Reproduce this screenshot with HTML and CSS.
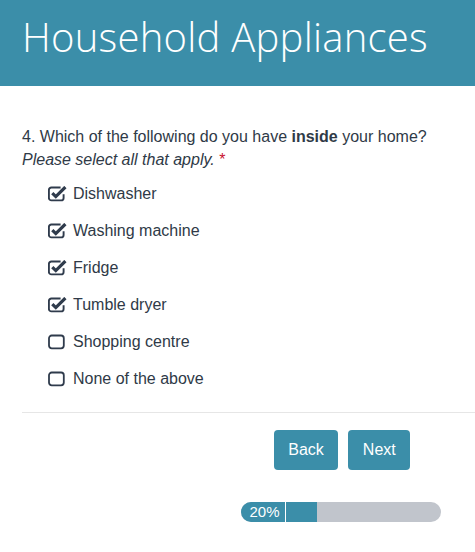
FILE: index.html
```html
<!DOCTYPE html>
<html>
<head>
<meta charset="utf-8">
<link rel="stylesheet" href="styles.css">
</head>
<body>
<header class="banner">
  <h1 class="title">Household Appliances</h1>
</header>
<main class="content">
  <div class="question">
    <p class="q-text">4. Which of the following do you have <b>inside</b> your home?</p>
    <p class="q-hint"><i>Please select all that apply.</i> <span class="req">*</span></p>
  </div>
  <ul class="options">
    <li class="option"><svg class="box" viewBox="0 0 19 16"><path d="M15.6 8.3v3.6a2.5 2.5 0 0 1-2.5 2.5H3.4a2.5 2.5 0 0 1-2.5-2.5V4a2.5 2.5 0 0 1 2.5-2.5h9.2" fill="none" stroke="#2f3b4c" stroke-width="1.9"/><path d="M4.3 7.1l3.5 3.5 9.6-9.6" fill="none" stroke="#2f3b4c" stroke-width="3.2" stroke-linejoin="miter"/></svg><span>Dishwasher</span></li>
    <li class="option"><svg class="box" viewBox="0 0 19 16"><path d="M15.6 8.3v3.6a2.5 2.5 0 0 1-2.5 2.5H3.4a2.5 2.5 0 0 1-2.5-2.5V4a2.5 2.5 0 0 1 2.5-2.5h9.2" fill="none" stroke="#2f3b4c" stroke-width="1.9"/><path d="M4.3 7.1l3.5 3.5 9.6-9.6" fill="none" stroke="#2f3b4c" stroke-width="3.2" stroke-linejoin="miter"/></svg><span>Washing machine</span></li>
    <li class="option"><svg class="box" viewBox="0 0 19 16"><path d="M15.6 8.3v3.6a2.5 2.5 0 0 1-2.5 2.5H3.4a2.5 2.5 0 0 1-2.5-2.5V4a2.5 2.5 0 0 1 2.5-2.5h9.2" fill="none" stroke="#2f3b4c" stroke-width="1.9"/><path d="M4.3 7.1l3.5 3.5 9.6-9.6" fill="none" stroke="#2f3b4c" stroke-width="3.2" stroke-linejoin="miter"/></svg><span>Fridge</span></li>
    <li class="option"><svg class="box" viewBox="0 0 19 16"><path d="M15.6 8.3v3.6a2.5 2.5 0 0 1-2.5 2.5H3.4a2.5 2.5 0 0 1-2.5-2.5V4a2.5 2.5 0 0 1 2.5-2.5h9.2" fill="none" stroke="#2f3b4c" stroke-width="1.9"/><path d="M4.3 7.1l3.5 3.5 9.6-9.6" fill="none" stroke="#2f3b4c" stroke-width="3.2" stroke-linejoin="miter"/></svg><span>Tumble dryer</span></li>
    <li class="option"><svg class="box" viewBox="0 0 19 16"><rect x="1" y="1.5" width="14.8" height="12.8" rx="2.7" fill="none" stroke="#2f3b4c" stroke-width="1.8"/></svg><span>Shopping centre</span></li>
    <li class="option"><svg class="box" viewBox="0 0 19 16"><rect x="1" y="1.5" width="14.8" height="12.8" rx="2.7" fill="none" stroke="#2f3b4c" stroke-width="1.8"/></svg><span>None of the above</span></li>
  </ul>
  <hr class="divider">
  <div class="footer">
    <div class="buttons">
      <button class="btn">Back</button>
      <button class="btn">Next</button>
    </div>
    <div class="progress">
      <span class="progress-label">20%</span>
      <span class="progress-fill" style="width: 31px"></span>
    </div>
  </div>
</main>
</body>
</html>
```
FILE: styles.css
```css
html, body {
  margin: 0;
  padding: 0;
  background: #ffffff;
}
body {
  font-family: "Liberation Sans", Arial, sans-serif;
  font-size: 16px;
  color: #2f3a47;
}
.banner {
  background: #3b8ea9;
  height: 86px;
  box-sizing: border-box;
  padding: 11px 0 0 22px;
}
.title {
  margin: 0;
  font-family: "Open Sans", sans-serif;
  font-weight: 300;
  font-size: 40px;
  line-height: 52px;
  letter-spacing: 0.25px;
  color: #ffffff;
}
.content {
  padding: 39px 0 0 22px;
}
.question p {
  margin: 0;
  line-height: 23px;
}
.q-text b {
  font-weight: bold;
}
.req {
  color: #c8102e;
}
.options {
  list-style: none;
  margin: 4px 0 0 0;
  padding: 0 0 0 26px;
}
.option {
  height: 37px;
  display: flex;
  align-items: center;
  gap: 6px;
  line-height: 23px;
}
.box {
  width: 19px;
  height: 16px;
  flex: none;
}
.divider {
  border: none;
  border-top: 1px solid #e6e6e6;
  margin: 15px 0 0 0;
  height: 0;
}
.footer {
  width: 200px;
  margin-left: 219px;
  padding-top: 17px;
}
.buttons {
  display: flex;
  justify-content: center;
  gap: 10px;
  padding-left: 2px;
}
.btn {
  background: #3b8ea9;
  color: #ffffff;
  border: none;
  border-radius: 4px;
  height: 40px;
  padding: 0 14.5px;
  font-family: "Liberation Sans", Arial, sans-serif;
  font-size: 16px;
}
.progress {
  margin-top: 32px;
  height: 20px;
  border-radius: 10px;
  background: #c1c5cc;
  overflow: hidden;
  display: flex;
}
.progress-label {
  width: 45px;
  background: #3b8ea9;
  color: #ffffff;
  font-size: 15px;
  line-height: 20px;
  text-align: center;
  border-right: 1px solid #ffffff;
  box-sizing: border-box;
  padding-left: 3px;
}
.progress-fill {
  display: block;
  background: #3b8ea9;
}
```
